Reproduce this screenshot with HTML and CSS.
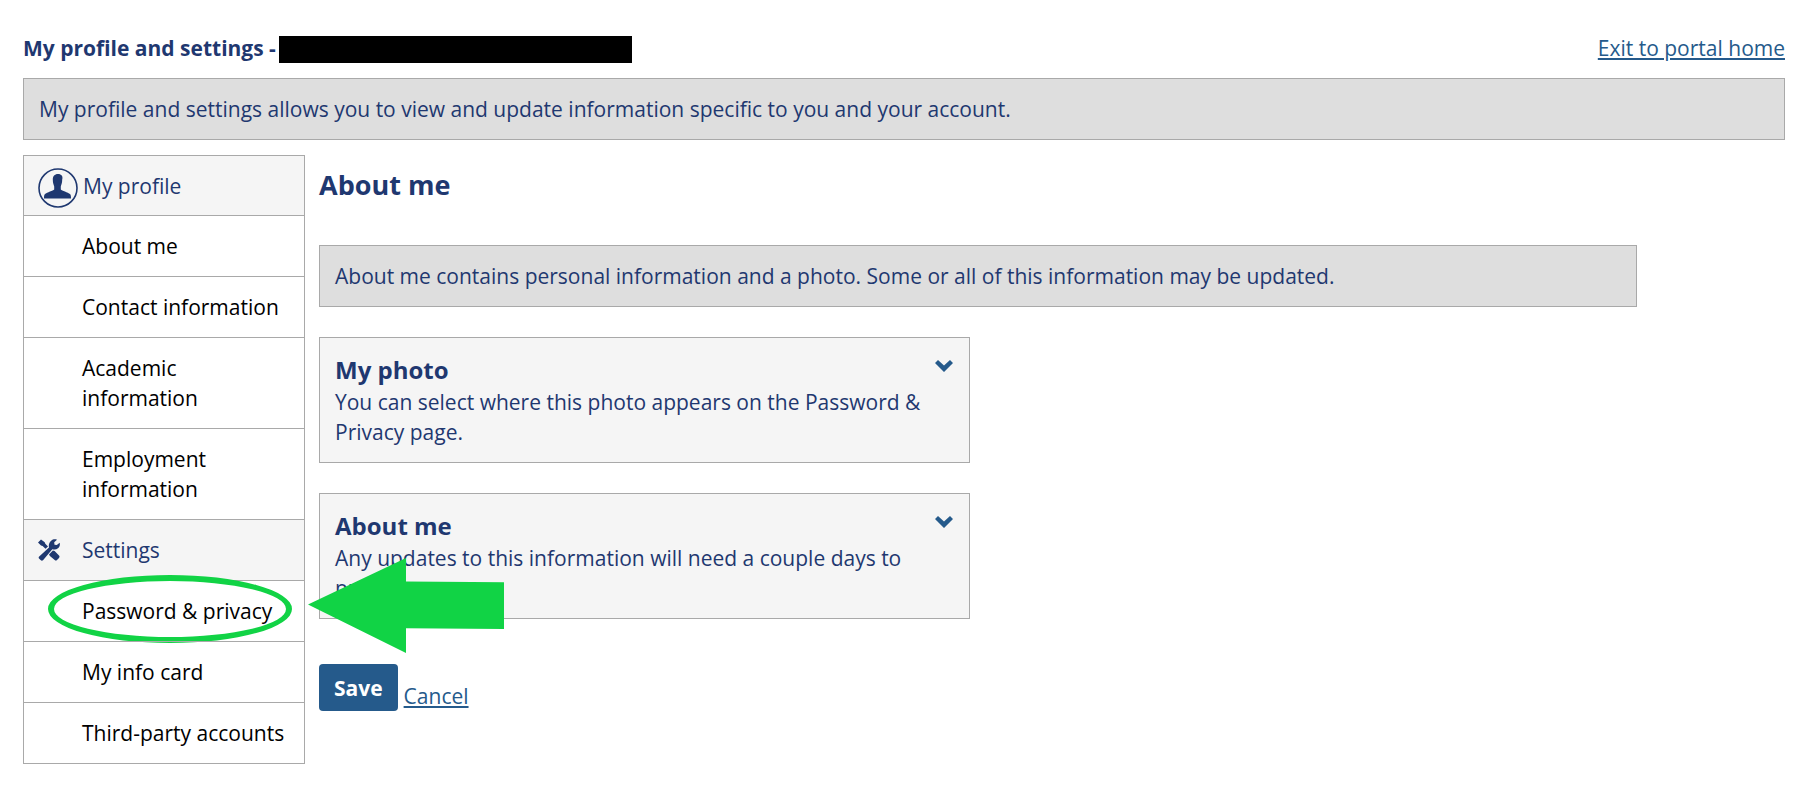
FILE: index.html
```html
<!DOCTYPE html>
<html lang="en">
<head>
    <meta charset="UTF-8">
    <meta name="viewport" content="width=device-width, initial-scale=1.0">
    <title>My profile and settings</title>
    <link rel="stylesheet" href="styles.css">
</head>
<body>

    <header class="page-header">
        <h1 class="page-title">My profile and settings - <span class="redacted"></span></h1>
        <a href="#">Exit to portal home</a>
    </header>

    <p class="notice">My profile and settings allows you to view and update information specific to you and your account.</p>

    <div class="columns">
        <nav class="sidebar">
            <div class="menu-heading menu-profile">
                <svg class="profile-icon" width="40" height="40" viewBox="0 0 40 40">
                    <circle cx="20" cy="20" r="19" fill="none" stroke="#1f3870" stroke-width="1.6"/>
                    <path fill="#1f3870" d="M20 6c-3.400 0-5.200 2.200-5.200 5.600 0 3.400.8 5.200 1.400 6.800v3c-1 1.400-7.200 2.600-9.200 4.600-.9.900-1 2-1 4.500h27c0-2.500-.1-3.600-1-4.500-2-2-8.200-3.200-9.200-4.600v-3c.6-1.600 1.400-3.400 1.400-6.800C25.200 8.200 23.400 6 20 6z"/>
                </svg>
                My profile
            </div>
            <ul>
                <li><a href="#">About me</a></li>
                <li><a href="#">Contact information</a></li>
                <li><a href="#">Academic information</a></li>
                <li><a href="#">Employment information</a></li>
            </ul>
            <div class="menu-heading">
                <svg class="tools-icon" width="22" height="22" viewBox="0 0 22 22" fill="#1f3870">
                    <path d="M1.200 17.400 11 8.500C10.400 6 11.200 3.400 13.200 1.700 14.900.2 17.200 0 19 .8L16.200 3.300l.3 2.400 2.300.4 2.900-2.300c.5 2.200-.1 4.200-1.700 5.500-1.700 1.400-3.700 1.600-5.700.9L5 21.300c-.8.6-1.600.5-2.400-.2L1 19.400c-.5-.6-.5-1.300.2-2z"/>
                    <path d="M0 3.600 3 .6l3.700 2.700.6 1.500 2.700 2.700-2.500 2.300-2.900-2.800-1.600-.6z"/>
                    <path d="M11 15.600 14.900 11.600l1.700.5 4.400 4.500c.7.800.7 1.500 0 2.300l-2 2c-.8.700-1.600.7-2.300 0L11.900 17.100z"/>
                </svg>
                Settings
            </div>
            <ul>
                <li class="highlighted">
                    <a href="#">Password &amp; privacy</a>
                    <span class="ring"></span>
                    <svg class="arrow" width="196" height="95" viewBox="0 0 196 95">
                        <path fill="#11d345" d="M0 46.500 98 0v23.500l98 .8V71l-98-.8V95z"/>
                    </svg>
                </li>
                <li><a href="#">My info card</a></li>
                <li><a href="#">Third-party accounts</a></li>
            </ul>
        </nav>

        <main class="content">
            <h2>About me</h2>
            <p class="notice">About me contains personal information and a photo. Some or all of this information may be updated.</p>

            <section class="card">
                <div>
                    <h3>My photo</h3>
                    <p>You can select where this photo appears on the Password &amp; Privacy page.</p>
                </div>
                <button class="expand" aria-label="Expand My photo">
                    <svg width="18" height="12" viewBox="0 0 18 12"><path fill="#255a8b" d="M3 0 9 5.500 15 0l3 3-9 9-9-9z"/></svg>
                </button>
            </section>

            <section class="card">
                <div>
                    <h3>About me</h3>
                    <p>Any updates to this information will need a couple days to process.</p>
                </div>
                <button class="expand" aria-label="Expand About me">
                    <svg width="18" height="12" viewBox="0 0 18 12"><path fill="#255a8b" d="M3 0 9 5.500 15 0l3 3-9 9-9-9z"/></svg>
                </button>
            </section>

            <div class="actions">
                <button class="save">Save</button>
                <a href="#">Cancel</a>
            </div>
        </main>
    </div>

</body>
</html>
```

FILE: styles.css
```css
* {
    box-sizing: border-box;
}

body {
    margin: 0;
    padding: 33px 35px 28px 23px;
    background-color: white;
    color: #1f3870;
    font-family: "Open Sans", Arial, sans-serif;
    font-size: 21px;
    line-height: 30px;
}

h1, h2, h3, p, ul {
    margin: 0;
    padding: 0;
}

a {
    color: #255a8b;
}

.page-header {
    display: flex;
    justify-content: space-between;
    margin-bottom: 15px;
}

.page-title {
    display: flex;
    align-items: center;
    gap: 3px;
    font-size: 21px;
}

.redacted {
    width: 353px;
    height: 27px;
    margin-top: 2px;
    background-color: black;
}

.notice {
    padding: 15px;
    background-color: #dedede;
    border: 1px solid #a9a9a9;
}

.columns {
    display: flex;
    align-items: flex-start;
    gap: 14px;
    margin-top: 15px;
}

/* Left menu */
.sidebar {
    flex: none;
    width: 282px;
    border: 1px solid #a9a9a9;
}

.sidebar ul {
    list-style: none;
}

.sidebar li {
    position: relative;
    border-top: 1px solid #a9a9a9;
}

.sidebar li a {
    display: block;
    padding: 15px 15px 15px 58px;
    color: black;
    text-decoration: none;
}

.menu-heading {
    display: flex;
    align-items: center;
    gap: 22px;
    height: 61px;
    padding: 0 14px;
    background-color: #f5f5f5;
    border-top: 1px solid #a9a9a9;
}

.menu-profile {
    gap: 5px;
    height: 59px;
    border-top: none;
}

.profile-icon {
    margin-top: 4px;
}

.ring {
    position: absolute;
    left: 24px;
    top: -6px;
    width: 244px;
    height: 68px;
    border: 6px solid #11d345;
    border-radius: 50%;
    pointer-events: none;
}

.arrow {
    position: absolute;
    left: 284px;
    top: -23px;
    z-index: 1;
    pointer-events: none;
}

/* Right side */
.content {
    flex: 1;
}

.content h2 {
    margin: 15px 0 45px;
    font-size: 27px;
}

.content .notice {
    width: 89.9%;
}

.card {
    display: flex;
    justify-content: space-between;
    align-items: flex-start;
    width: 44.4%;
    margin-top: 30px;
    padding: 17px 15px 15px;
    background-color: #f5f5f5;
    border: 1px solid #a9a9a9;
}

.card h3 {
    margin-bottom: 2px;
    font-size: 24px;
}

.expand {
    display: flex;
    padding: 5px 1px;
    background: none;
    border: none;
    cursor: pointer;
}

.actions {
    display: flex;
    align-items: flex-end;
    gap: 6px;
    margin-top: 45px;
}

.save {
    height: 47px;
    padding: 0 15px;
    background-color: #255a8b;
    color: white;
    border: none;
    border-radius: 4px;
    font-family: inherit;
    font-size: 21px;
    font-weight: bold;
    cursor: pointer;
}
```
